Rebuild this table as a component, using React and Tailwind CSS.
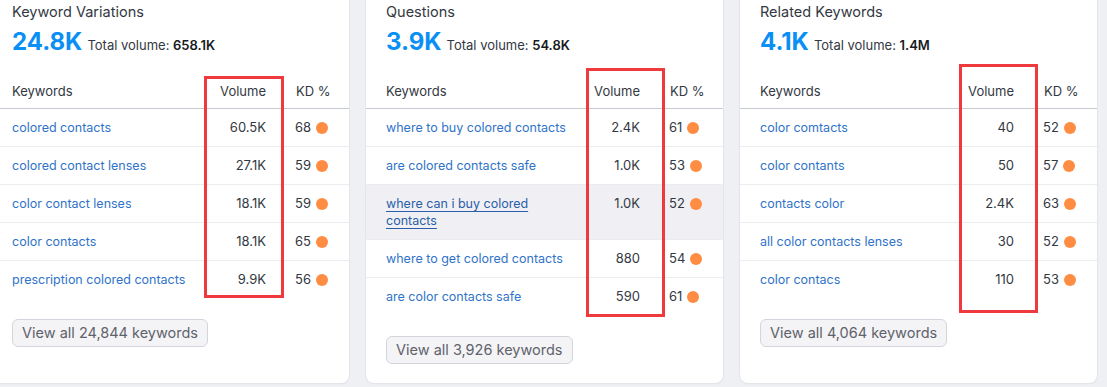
import React from "react";

const cards = [
  {
    title: "Keyword Variations",
    big: "24.8K",
    total: "658.1K",
    rows: [
      ["colored contacts", "60.5K", "68"],
      ["colored contact lenses", "27.1K", "59"],
      ["color contact lenses", "18.1K", "59"],
      ["color contacts", "18.1K", "65"],
      ["prescription colored contacts", "9.9K", "56"],
    ],
    button: "View all 24,844 keywords",
    box: "left-[212px] top-[76px] w-[80px] h-[222px]",
  },
  {
    title: "Questions",
    big: "3.9K",
    total: "54.8K",
    rows: [
      ["where to buy colored contacts", "2.4K", "61"],
      ["are colored contacts safe", "1.0K", "53"],
      ["where can i buy colored contacts", "1.0K", "52", true],
      ["where to get colored contacts", "880", "54"],
      ["are color contacts safe", "590", "61"],
    ],
    button: "View all 3,926 keywords",
    box: "left-[220px] top-[68px] w-[79px] h-[249px]",
  },
  {
    title: "Related Keywords",
    big: "4.1K",
    total: "1.4M",
    rows: [
      ["color comtacts", "40", "52"],
      ["color contants", "50", "57"],
      ["contacts color", "2.4K", "63"],
      ["all color contacts lenses", "30", "52"],
      ["color contacs", "110", "53"],
    ],
    button: "View all 4,064 keywords",
    box: "left-[219px] top-[64px] w-[79px] h-[249px]",
  },
];

function Card({ c }) {
  return (
    <div className="relative w-[357px] shrink-0 bg-white rounded-b-lg shadow-[0_0_0_1px_#e4e5ea,0_1px_2px_rgba(0,0,0,0.06)] flex flex-col">
      <div className="px-5 pt-[2px]">
        <div className="text-[14.5px] leading-[20px] text-[#333842]">{c.title}</div>
        <div className="mt-1 flex items-baseline h-[32px]">
          <span className="text-[24px] leading-[32px] font-bold text-[#0a8ff5]">{c.big}</span>
          <span className="ml-[5px] text-[13px] text-[#333842]">
            Total volume: <b className="font-semibold text-[#171a22]">{c.total}</b>
          </span>
        </div>
      </div>
      <div className="mt-[18px]">
        <div className="grid grid-cols-[1fr_70px_63px] pl-5 pr-5 h-[33px] items-center border-b border-[#c8cad2] text-[13px] text-[#333842]">
          <span>Keywords</span>
          <span className="text-right">Volume</span>
          <span className="pl-[30px] whitespace-nowrap">KD %</span>
        </div>
        {c.rows.map((r, i) => (
          <div
            key={i}
            className={
              "grid grid-cols-[1fr_70px_63px] pl-5 pr-5 py-[10px] leading-[17px] text-[13px] items-start " +
              (i < c.rows.length - 1 ? "border-b border-[#ebecf0] " : "border-b border-transparent ") +
              (r[3] ? "bg-[#f0f0f4]" : "")
            }
          >
            <span className="text-[12.5px]">
              {r[3] ? (
                <span className="text-[#2a5ea8] underline underline-offset-[3px] decoration-[#2a5ea8]">{r[0]}</span>
              ) : (
                <span className="text-[#2f73c9]">{r[0]}</span>
              )}
            </span>
            <span className="text-right text-[#333842]">{r[1]}</span>
            <span className="pl-[29px] flex items-center gap-[5px] text-[#333842] whitespace-nowrap">
              {r[2]}
              <span className="inline-block w-[12px] h-[12px] shrink-0 rounded-full bg-[#ff8c43]" />
            </span>
          </div>
        ))}
      </div>
      <div className="pl-5 mt-[20px]">
        <button className="h-[28px] px-[9px] rounded-md border border-[#d3d5dc] bg-[#f4f4f6] text-[14.5px] text-[#5f626b]">
          {c.button}
        </button>
      </div>
      <div className={"absolute border-[3px] border-[#ef3a3d] " + c.box} />
    </div>
  );
}

export default function App() {
  return (
    <div
      className="w-[1107px] h-[387px] overflow-hidden bg-[#eff0f4]"
      style={{ fontFamily: "Inter, 'Noto Sans', sans-serif" }}
    >
      <div className="flex gap-[17px] -ml-[8px] h-[383px]">
        {cards.map((c, i) => (
          <Card key={i} c={c} />
        ))}
      </div>
    </div>
  );
}
